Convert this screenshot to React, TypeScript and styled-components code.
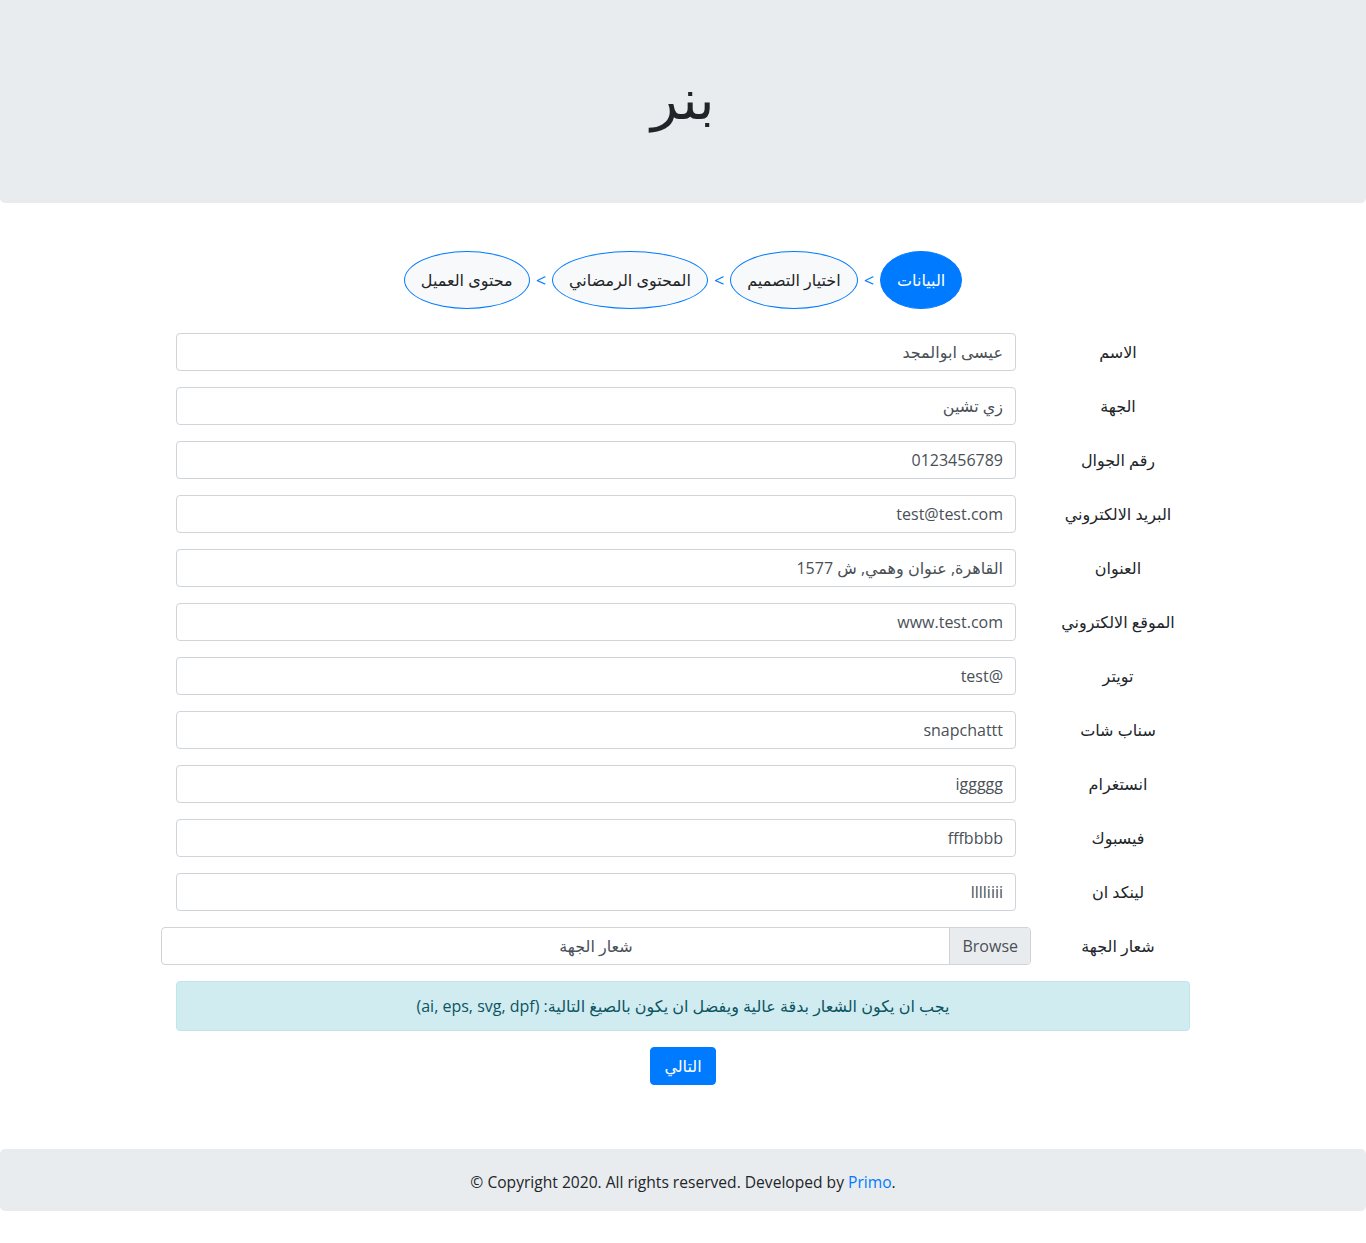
import { Fragment } from 'react';
import { createGlobalStyle, styled } from 'styled-components';

const GlobalStyle = createGlobalStyle`
  body {
    margin: 0;
    font-family: "Open Sans", "DejaVu Sans", sans-serif;
    font-size: 16px;
    line-height: 1.5;
    color: #212529;
    background: #fff;
  }
`;

const Page = styled.div`
  direction: rtl;
  padding-bottom: 32px;
`;

const Banner = styled.header`
  background: #e9ecef;
  border-radius: 0 0 5px 5px;
  padding: 64px 32px;
  text-align: center;
`;

const BannerTitle = styled.h1`
  margin: 0 0 8px;
  font-size: 56px;
  font-weight: 200;
  line-height: 1.2;
`;

const Steps = styled.nav`
  display: flex;
  justify-content: center;
  align-items: center;
  gap: 6px;
  margin: 48px 0 24px;
`;

const Step = styled.span<{ $active?: boolean }>`
  display: inline-block;
  padding: 16px;
  line-height: 24px;
  border: 1px solid #007bff;
  border-radius: 50%;
  background: ${({ $active }) => ($active ? '#007bff' : '#f8f9fa')};
  color: ${({ $active }) => ($active ? '#fff' : '#212529')};
  white-space: nowrap;
`;

const Arrow = styled.span`
  color: #007bff;
  font-size: 18px;
`;

const Form = styled.form`
  width: 1014px;
  margin: 0 auto;
`;

const Row = styled.div`
  display: grid;
  grid-template-columns: 144px 840px;
  column-gap: 30px;
  align-items: center;
  margin-bottom: 16px;
`;

const Label = styled.label`
  text-align: center;
`;

const Input = styled.input`
  box-sizing: border-box;
  width: 100%;
  height: 38px;
  padding: 6px 12px;
  border: 1px solid #ced4da;
  border-radius: 4px;
  font-family: inherit;
  font-size: 16px;
  color: #495057;
  text-align: right;
  direction: rtl;
  background: #fff;
  &:focus {
    outline: 0;
    border-color: #80bdff;
  }
`;

const FileBox = styled.div`
  position: relative;
  box-sizing: border-box;
  height: 38px;
  margin: 0 -15px;
  border: 1px solid #ced4da;
  border-radius: 4px;
  color: #495057;
  text-align: center;
  line-height: 36px;
`;

const Browse = styled.span`
  position: absolute;
  top: 0;
  right: 0;
  bottom: 0;
  padding: 0 12px;
  background: #e9ecef;
  border-left: 1px solid #ced4da;
  border-radius: 0 3px 3px 0;
  direction: ltr;
`;

const Alert = styled.div`
  padding: 12px 20px;
  border: 1px solid #bee5eb;
  border-radius: 4px;
  background: #d1ecf1;
  color: #0c5460;
  text-align: center;
`;

const Actions = styled.div`
  display: flex;
  justify-content: center;
  margin-top: 16px;
`;

const NextButton = styled.button`
  height: 38px;
  padding: 0 13px;
  border: 1px solid #007bff;
  border-radius: 4px;
  background: #007bff;
  color: #fff;
  font-family: inherit;
  font-size: 16px;
  cursor: pointer;
`;

const Footer = styled.footer`
  margin-top: 64px;
  padding: 22px 0 16px;
  background: #e9ecef;
  border-radius: 5px;
  text-align: center;
  direction: ltr;
  font-size: 15.6px;
`;

const Link = styled.a`
  color: #007bff;
  text-decoration: none;
`;

const fields = [
  ['الاسم', 'عيسى ابوالمجد'],
  ['الجهة', 'زي تشين'],
  ['رقم الجوال', '0123456789'],
  ['البريد الالكتروني', 'test@test.com'],
  ['العنوان', 'القاهرة, عنوان وهمي, ش 1577'],
  ['الموقع الالكتروني', 'www.test.com'],
  ['تويتر', '@test'],
  ['سناب شات', 'snapchattt'],
  ['انستغرام', 'iggggg'],
  ['فيسبوك', 'fffbbbb'],
  ['لينكد ان', 'lllliiii'],
];

const steps = ['البيانات', 'اختيار التصميم', 'المحتوى الرمضاني', 'محتوى العميل'];

export default function App() {
  return (
    <Page>
      <GlobalStyle />
      <Banner>
        <BannerTitle>بنر</BannerTitle>
      </Banner>

      <Steps>
        {steps.map((s, i) => (
          <Fragment key={s}>
            {/* ">" is mirrored to "<" in RTL */}
            {i > 0 && <Arrow>&gt;</Arrow>}
            <Step $active={i === 0}>{s}</Step>
          </Fragment>
        ))}
      </Steps>

      <Form onSubmit={(e) => e.preventDefault()}>
        {fields.map(([label, value]) => (
          <Row key={label}>
            <Label>{label}</Label>
            <Input defaultValue={value} />
          </Row>
        ))}
        <Row>
          <Label>شعار الجهة</Label>
          <FileBox>
            شعار الجهة
            <Browse>Browse</Browse>
          </FileBox>
        </Row>
        <Alert>يجب ان يكون الشعار بدقة عالية ويفضل ان يكون بالصيغ التالية: (ai, eps, svg, dpf)</Alert>
        <Actions>
          <NextButton type="submit">التالي</NextButton>
        </Actions>
      </Form>

      <Footer>
        © Copyright 2020. All rights reserved. Developed by <Link href="#">Primo</Link>.
      </Footer>
    </Page>
  );
}
